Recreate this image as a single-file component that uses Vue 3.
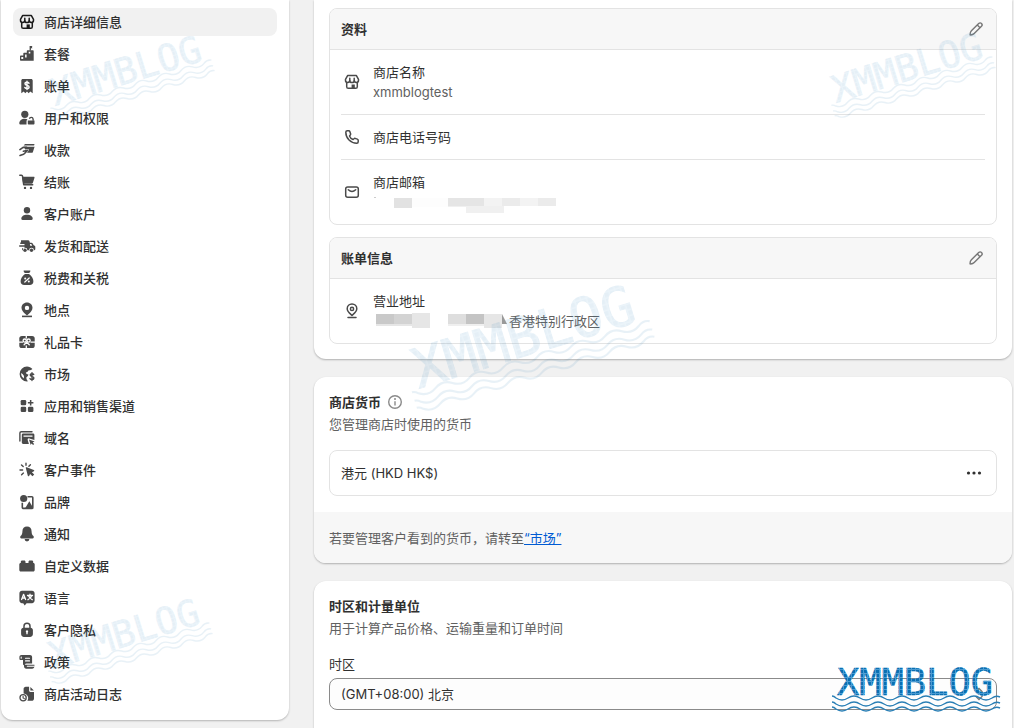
<script setup>
import { ref } from 'vue'

const store =
  '<g fill="none" stroke="currentColor" stroke-width="1.5" stroke-linejoin="round" stroke-linecap="round"><path d="M5.600 3.600h8.800l2.100 3.700v.9a2.100 2.100 0 0 1-4.300.2 2.200 2.200 0 0 1-4.400 0 2.100 2.100 0 0 1-4.300-.2v-.9z"/><path d="M4.700 10.400v4.300c0 .9.700 1.600 1.600 1.600h7.400c.9 0 1.600-.7 1.600-1.600v-4.300M7.800 6.200v2M12.200 6.200v2"/></g><path d="M9.600 12.400h3.200v4h-3.200z"/>'

const items = [
  { label: '商店详细信息', icon: store },
  {
    label: '套餐',
    icon: '<path d="M3 12.500c0-.6.4-1 1-1h2.300V9.800c0-.6.4-1 1-1h2.500V7.200c0-.6.4-1 1-1h4.900c.6 0 1 .4 1 1v9.600H4c-.6 0-1-.4-1-1z"/><path fill="#fff" d="M4.300 13h1.900v2H4.300zM8.100 10.400h1.500v3H8.100zM11.700 7.800h1.600v1.800h-1.600z"/><path d="M12.600 2h2.900l-.7 1 .7 1.200h-1.600v2.300h-1.300z"/>',
  },
  {
    label: '账单',
    icon: '<path d="M4.300 4.500c0-.9.700-1.600 1.500-1.600h8.400c.8 0 1.500.7 1.500 1.600V17.200l-2.400-1.600-1.600 1.600-1.700-1.600-1.700 1.600-1.600-1.600-2.400 1.600z"/><path fill="none" stroke="#fff" stroke-width="1.400" stroke-linecap="round" d="M12 7.200c-.5-.6-1.200-.9-2-.9-1.100 0-2 .6-2 1.500 0 2.200 4.100 1 4.100 3.100 0 1-.9 1.600-2.100 1.600-.9 0-1.700-.4-2.200-1M10 5.200v8.400"/>',
  },
  {
    label: '用户和权限',
    icon: '<circle cx="7.800" cy="6.300" r="3.600"/><path d="M2.300 15.300c0-2.800 2.300-4.600 5.500-4.600 1 0 1.900.2 2.700.5-.7.6-1 1.300-1 2.200v3.200H3.600c-.8 0-1.300-.5-1.300-1.300zM10.800 12.500h6.700v2.900c0 .7-.5 1.200-1.200 1.200H12c-.7 0-1.200-.5-1.200-1.200z"/><path fill="none" stroke="currentColor" stroke-width="1.400" d="M12.400 10.800a1.900 1.900 0 0 1 3.700.2v1.700"/>',
  },
  {
    label: '收款',
    icon: '<path d="M8 4h9.500l-.4 1.600H6.700zM7 6.700h10.600l-1.700 5.200c-.2.600-.6.900-1.200.9H10l1.700-2.200c.6-.8 0-1.800-1-1.600l-2.500.4z"/><path fill="none" stroke="currentColor" stroke-width="1.600" stroke-linecap="round" stroke-linejoin="round" d="M2.900 9.600l3.200-2.200h3.500M3 15.500l3.500-1.300c1.200-.5 2.400-2 4.200-4l-4.300 1"/>',
  },
  {
    label: '结账',
    icon: '<path fill="none" stroke="currentColor" stroke-width="1.500" stroke-linecap="round" stroke-linejoin="round" d="M2.800 3.300h1.700c.6 0 .9.300 1 .9l1.200 8.500h9"/><path d="M5 4.800h11.700c.6 0 1 .5.800 1l-1.600 5c-.2.600-.7.900-1.300.9H6.200z"/><circle cx="8" cy="15.900" r="1.200"/><circle cx="14" cy="15.900" r="1.200"/>',
  },
  {
    label: '客户账户',
    icon: '<circle cx="10" cy="6.200" r="3.200"/><path d="M4.300 14.800c0-2.500 2.500-4 5.700-4s5.700 1.500 5.700 4c0 .7-.5 1.200-1.200 1.200h-9c-.7 0-1.200-.5-1.200-1.200z"/>',
  },
  {
    label: '发货和配送',
    icon: '<path d="M4 4.300h7.200c.6 0 1 .3 1.200.8l.5 1.700h1.600c.5 0 .9.300 1.200.7l1 1.700 1 .6c.4.200.6.600.6 1v2.200c0 .7-.4 1.200-1 1.200h-.4a2.400 2.400 0 0 0-4.800 0h-1.700a2.400 2.400 0 0 0-4.800 0H5V12.300h2.500v-1.500H2.200V9.300h5.300V7.900H3.200V6.400H4z"/><circle cx="8" cy="14.300" r="1.700"/><circle cx="14.500" cy="14.300" r="1.700"/><path fill="#fff" d="M12.900 8.100h1.400l.9 1.600h-2z"/>',
  },
  {
    label: '税费和关税',
    icon: '<path d="M7.200 2.400h5.600c.5 0 .8.500.6.900L12.300 5H7.700L6.600 3.300c-.2-.4.100-.9.600-.9zM8 6h4c2.500 1.800 4.400 4.300 4.400 7.300 0 2.500-1.500 3.800-3.600 3.800H7.200c-2.100 0-3.600-1.300-3.600-3.800C3.600 10.300 5.500 7.800 8 6z"/><path stroke="#fff" stroke-width="1.200" stroke-linecap="round" d="M7.800 14l4.400-4"/><circle cx="8.200" cy="10.500" r="1" fill="#fff"/><circle cx="11.800" cy="13.600" r="1" fill="#fff"/>',
  },
  {
    label: '地点',
    icon: '<path fill-rule="evenodd" d="M10 2.500c3.200 0 5.500 2.300 5.500 5.300 0 2.600-1.800 4.300-3.500 6L10 15.600l-2-1.800c-1.700-1.700-3.500-3.400-3.500-6 0-3 2.300-5.300 5.500-5.300zm0 3.200a2.200 2.200 0 1 0 0 4.400 2.200 2.200 0 0 0 0-4.400z"/><path d="M5 15.600h10v1.600H5z"/>',
  },
  {
    label: '礼品卡',
    icon: '<rect x="2.300" y="4" width="15.400" height="12" rx="2.600"/><g fill="none" stroke="#fff" stroke-width="1.300"><path d="M9.300 3.500v3.100M9.300 13.600v3M2 10.200h4M13.500 10.200H18"/><circle cx="7.700" cy="8.600" r="1.600"/><circle cx="11.600" cy="8.600" r="1.600"/><path stroke-linecap="round" d="M9.600 10.200l-2.500 2.600M9.600 10.200l2.700 2.600"/></g>',
  },
  {
    label: '市场',
    icon: '<path fill-rule="evenodd" d="M10 2.600c2.100 0 4 .9 5.400 2.400l-1.400.9-2.600.5-1.100 1.700-1.500.4.800 1.500 1.800.4-.5 1.700-1.500 1.200c-.1 1.600.4 2.900 1.500 3.900l-.9.200a7.400 7.400 0 0 1 0-14.800zM4.200 9.100c-.2 2.300.8 4.300 2.600 5.300l.2-2.500-1.200-1.700z"/><path fill="none" stroke="currentColor" stroke-width="1.400" stroke-linecap="round" d="M16.700 10.500c-.4-.6-1-.8-1.700-.8-1 0-1.800.5-1.800 1.400 0 2 3.700 1 3.700 2.900 0 .9-.8 1.500-1.900 1.500-.8 0-1.600-.3-2-.9M15 8.600v8"/>',
  },
  {
    label: '应用和销售渠道',
    icon: '<rect x="3.700" y="4" width="5.500" height="5.300" rx="1.300"/><rect x="3.700" y="10.800" width="5.500" height="5.300" rx="1.300"/><rect x="10.900" y="10.800" width="5.500" height="5.300" rx="1.300"/><path d="M12.900 4h1.500v2h2v1.500h-2v2h-1.500v-2h-2V6h2z"/>',
  },
  {
    label: '域名',
    icon: '<path fill="none" stroke="currentColor" stroke-width="1.400" stroke-linecap="round" d="M2.900 13V5.100c0-.8.600-1.400 1.400-1.400H15"/><path fill-rule="evenodd" d="M6.200 5.600h9.800c.8 0 1.400.6 1.400 1.400v4.900l-5.100-1.500c-1-.3-1.900.6-1.600 1.600l1.200 4H6.200c-.8 0-1.400-.6-1.400-1.400V7c0-.8.600-1.400 1.400-1.400zM6.500 7.500v1.200h9V7.500z"/><path d="M12 11.400l5.600 2-2 1 1.600 1.600-1.100 1-1.600-1.600-.8 1.600z"/>',
  },
  {
    label: '客户事件',
    icon: '<path d="M8.800 8.100c-.2-.5.300-1 .9-.8l7.100 2.600c.6.200.6 1 .1 1.300l-2 1 2.300 2.400-1.700 1.700-2.400-2.400-1 2c-.3.500-1.100.5-1.300-.1z"/><path fill="none" stroke="currentColor" stroke-width="1.400" stroke-linecap="round" d="M9 3.200v2.100M4.500 5l1.700 1.600M3 10h2.600M4.600 14.700l1.800-1.600M13.400 4.700l-1.500 1.500"/>',
  },
  {
    label: '品牌',
    icon: '<circle cx="6.700" cy="6.500" r="3.600"/><path fill="none" stroke="currentColor" stroke-width="1.600" d="M10.500 4.700h4.400c.5 0 .9.400.9.900v9.900c0 .5-.4.900-.9.900H6.200c-.5 0-.9-.4-.9-.9v-4.700"/><path d="M12.300 9.200l4.200 7.300H8z"/>',
  },
  {
    label: '通知',
    icon: '<path d="M10 2.600c2.800 0 4.600 2 4.600 4.800 0 2.200.6 3.300 1.800 4.600.9 1 .4 2.400-.9 2.400h-11c-1.300 0-1.800-1.400-.9-2.400 1.200-1.300 1.800-2.400 1.800-4.600 0-2.800 1.800-4.800 4.600-4.800zM7.600 15h4.800a2.400 2.400 0 0 1-4.800 0z"/>',
  },
  {
    label: '自定义数据',
    icon: '<path d="M2.300 8.500c0-.8.600-1.400 1.500-1.400V6c0-.8.600-1.400 1.300-1.400h2.100c.8 0 1.300.6 1.300 1.400v1.100h3V6c0-.8.500-1.400 1.300-1.400h2.100c.8 0 1.300.6 1.300 1.400v1.100c.9 0 1.500.6 1.500 1.400v5.400c0 .8-.6 1.500-1.500 1.500H3.800c-.9 0-1.500-.7-1.500-1.500z"/>',
  },
  {
    label: '语言',
    icon: '<path d="M5 2.800h10c1.500 0 2.600 1.100 2.600 2.600v7.200c0 1.500-1.100 2.600-2.600 2.600H9.600l-1.900 2.200-1.500-2.200H5c-1.500 0-2.600-1.100-2.600-2.600V5.400C2.400 3.900 3.500 2.800 5 2.800z"/><path fill="none" stroke="#fff" stroke-width="1.300" stroke-linecap="round" stroke-linejoin="round" d="M4.600 11.500l2-5.200 2 5.200M5.300 10h2.600M10.500 7.500h5M13 6.200v1.300M14.600 7.800c-.5 1.700-1.700 3-3.600 3.900M11.500 7.800c.7 1.700 1.900 3 3.700 3.900"/>',
  },
  {
    label: '客户隐私',
    icon: '<path fill="none" stroke="currentColor" stroke-width="1.500" d="M7 8.500V6.300a3 3 0 0 1 6 0v2.200"/><path fill-rule="evenodd" d="M6.500 7.700h7c1.400 0 2.400 1 2.400 2.400v3.900c0 1.600-1.200 2.900-2.900 2.900H7c-1.700 0-2.900-1.300-2.900-2.900v-3.900c0-1.400 1-2.400 2.400-2.400zM10 10.300a1.300 1.300 0 0 0-.7 2.300v1.700h1.400v-1.700a1.300 1.300 0 0 0-.7-2.300z"/>',
  },
  {
    label: '政策',
    icon: '<path d="M4.500 2.900H13c1.200 0 2.100.9 2.100 2.100v6.500H9.500c-1.300 0-2 .8-2 2.300L6 12.500V8H3.700c-.8 0-1.300-.5-1.300-1.300V5c0-1.200.9-2.100 2.100-2.100z"/><path d="M8.500 12.700h8.900v1.600c0 1.500-.9 2.400-2.300 2.400H9.300c-1.400 0-2.300-.9-2.300-2.400v-2.500z"/><path fill="none" stroke="#fff" stroke-width="1.100" stroke-linecap="round" d="M8.500 6.200h4M8.500 8.900h4M4.200 6.300V5M10.300 14.300h7"/>',
  },
  {
    label: '商店活动日志',
    icon: '<path d="M8.800 2.800h3.300v3.900c0 .7.600 1.200 1.300 1.200H17v6.500c0 1.400-1 2.300-2.300 2.300h-4.300c.5-.8.800-1.700.8-2.600 0-2.600-1.900-4.600-4.600-4.700V5.100c0-1.400.9-2.300 2.200-2.300z"/><path d="M13.400 3l3.500 3.600h-3.500z"/><circle cx="6.100" cy="13.800" r="3.100" fill="none" stroke="currentColor" stroke-width="1.300"/><path fill="none" stroke="currentColor" stroke-width="1.100" stroke-linecap="round" d="M6.100 12.300v1.700l1.200.5"/>',
  },
]

const phone =
  '<path fill="none" stroke="currentColor" stroke-width="1.500" stroke-linejoin="round" d="M5.300 3.800h1.400c.6 0 1 .3 1.200.9l.7 2.100c.1.500 0 .9-.3 1.200l-.8.900c.6 1.700 1.900 3 3.600 3.600l.9-.8c.3-.3.8-.4 1.200-.3l2.100.7c.6.2.9.600.9 1.200v1.400c0 .9-.7 1.500-1.500 1.500C8.800 16.200 3.800 11.200 3.800 5.300c0-.8.600-1.500 1.500-1.500z"/>'
const mail =
  '<g fill="none" stroke="currentColor" stroke-width="1.500" stroke-linecap="round"><rect x="3.700" y="5" width="12.600" height="10.300" rx="2"/><path d="M6.300 7.800c2.200 2 5.200 2 7.400 0"/></g>'
const pin =
  '<g fill="none" stroke="currentColor" stroke-width="1.500" stroke-linecap="round" stroke-linejoin="round"><path d="M10 14.400c-1.700-1.600-4.800-3.800-4.800-6.700a4.800 4.800 0 0 1 9.600 0c0 2.900-3.100 5.100-4.800 6.700z"/><circle cx="10" cy="7.900" r="1.600"/><path d="M6 16.500h8"/></g>'

const timezone = ref('beijing')
const waves = [32, 38, 43]
const marks = ['mark-nav-top', 'mark-nav-bottom', 'mark-right', 'mark-center', 'mark-solid']
const wavePath = (y) => `M0 ${y - 2}q2 0 4 2q6 4 12 0${'t12 0'.repeat(12)}q4 -3 8 -1`
</script>

<template>
  <div class="page">
    <nav class="sidebar" aria-label="设置">
      <a v-for="(item, i) in items" :key="item.label" href="#" class="nav-item" :class="{ active: i === 0 }">
        <svg class="icon" viewBox="0 0 20 20" aria-hidden="true" v-html="item.icon"></svg>
        <span>{{ item.label }}</span>
      </a>
    </nav>

    <main class="content">
      <section class="card first">
        <div class="group">
          <header class="group-head">
            <h2>资料</h2>
            <button type="button" class="icon-button" aria-label="编辑资料">
              <svg class="icon" viewBox="0 0 20 20"><path d="M12.700 4.500a1.950 1.950 0 0 1 2.800 2.800l-7.300 7.300c-.9.9-1.900 1.500-4.100 1.300-.2-2.200.4-3.200 1.300-4.100zM11.300 6l2.700 2.700" /></svg>
            </button>
          </header>
          <div class="row">
            <svg class="icon" viewBox="0 0 20 20" aria-hidden="true" v-html="store"></svg>
            <div><p>商店名称</p><p class="muted">xmmblogtest</p></div>
          </div>
          <div class="row">
            <svg class="icon" viewBox="0 0 20 20" aria-hidden="true" v-html="phone"></svg>
            <p>商店电话号码</p>
          </div>
          <div class="row">
            <svg class="icon" viewBox="0 0 20 20" aria-hidden="true" v-html="mail"></svg>
            <div>
              <p>商店邮箱</p>
              <svg class="redacted" width="190" height="20" aria-hidden="true">
                <path fill="#e2e2e2" d="M21 6h18v10H21z" />
                <path fill="#fdfdfd" d="M39 6h36v9H39z" />
                <path fill="#e5e5e5" d="M75 6h36v8H75z" />
                <path fill="#f3f3f3" d="M111 6h54v8h-54z" />
                <path fill="#ebebeb" d="M129 6h18v8h-18zM165 6h18v8h-18z" />
                <path fill="#f0f0f0" d="M93 14h38v7H93zM75 14h18v1H75z" />
                <path fill="#ccc" d="M1 5h2v1H1z" />
              </svg>
            </div>
          </div>
        </div>
        <div class="group">
          <header class="group-head">
            <h2>账单信息</h2>
            <button type="button" class="icon-button" aria-label="编辑账单信息">
              <svg class="icon" viewBox="0 0 20 20"><path d="M12.700 4.500a1.950 1.950 0 0 1 2.800 2.800l-7.300 7.300c-.9.9-1.900 1.500-4.100 1.300-.2-2.200.4-3.200 1.300-4.100zM11.300 6l2.700 2.700" /></svg>
            </button>
          </header>
          <div class="row">
            <svg class="icon" viewBox="0 0 20 20" aria-hidden="true" v-html="pin"></svg>
            <div>
              <p>营业地址</p>
              <p class="muted address">
                <svg class="redacted" width="136" height="20" aria-hidden="true">
                  <path fill="#c9c9c9" d="M3 3h18v10H3z" />
                  <path fill="#d3d3d3" d="M21 3h18v10H21z" />
                  <path fill="#e6e6e6" d="M39 2h18v15H39zM3 13h36v2H3zM111 3h18v14h-18z" />
                  <path fill="#dedede" d="M75 3h18v10H75z" />
                  <path fill="#c4c4c4" d="M93 3h18v10H93z" />
                  <path fill="#efefef" d="M75 13h36v2H75z" />
                  <path fill="#999" d="M129 3l5 10h-5z" />
                </svg>
                <span>香港特别行政区</span>
              </p>
            </div>
          </div>
        </div>
      </section>

      <section class="card">
        <div class="section">
          <div class="title">
            <h2>商店货币</h2>
            <svg class="icon info" viewBox="0 0 20 20" aria-hidden="true">
              <circle cx="10" cy="10" r="6.300" fill="none" stroke="currentColor" stroke-width="1.400" />
              <path d="M9.300 9.200h1.400v4.300H9.300z" /><circle cx="10" cy="7" r="1" />
            </svg>
          </div>
          <p class="muted subtitle">您管理商店时使用的货币</p>
          <div class="currency">
            <span>港元 (HKD HK$)</span>
            <button type="button" class="icon-button more" aria-label="更多操作">
              <svg class="icon" viewBox="0 0 20 20"><circle cx="4.500" cy="10" r="1.600" /><circle cx="10" cy="10" r="1.600" /><circle cx="15.500" cy="10" r="1.600" /></svg>
            </button>
          </div>
        </div>
        <footer class="card-foot muted">若要管理客户看到的货币，请转至<a href="#">“市场”</a></footer>
      </section>

      <section class="card last">
        <div class="section">
          <h2>时区和计量单位</h2>
          <p class="muted subtitle">用于计算产品价格、运输重量和订单时间</p>
          <div class="field">
            <label for="timezone">时区</label>
            <div class="select-wrap">
              <select id="timezone" v-model="timezone">
                <option value="beijing">(GMT+08:00) 北京</option>
              </select>
              <svg class="icon caret" viewBox="0 0 20 20" aria-hidden="true"><path d="M6.500 8L10 4.500 13.500 8M6.500 12l3.500 3.500 3.500-3.500" /></svg>
            </div>
          </div>
        </div>
      </section>
    </main>

    <svg v-for="mark in marks" :key="mark" class="mark" :class="mark" viewBox="0 0 168 48" aria-hidden="true">
      <defs>
        <pattern :id="mark + '-dots'" width="4" height="4" patternUnits="userSpaceOnUse">
          <rect width="4" height="4" fill="#4a9ad0" />
          <rect width="3" height="3" fill="#0a6fb2" />
        </pattern>
      </defs>
      <text x="5" y="29" class="mark-text" :fill="`url(#${mark}-dots)`" :stroke="`url(#${mark}-dots)`">XMMBLOG</text>
      <path v-for="y in waves" :key="y" :d="wavePath(y)" class="wave" />
    </svg>
  </div>
</template>

<style>
body {
  margin: 0;
  background: #f1f1f1;
}
</style>

<style scoped>
.page {
  position: relative;
  box-sizing: border-box;
  display: flex;
  align-items: flex-start;
  gap: 25px;
  height: 100vh;
  padding: 0 2px 0 1px;
  overflow: hidden;
  font: 400 13px/20px Inter, "Noto Sans CJK SC", sans-serif;
  color: #303030;
}
h2,
p {
  margin: 0;
  font-size: 13px;
  line-height: 20px;
}
h2 {
  font-weight: 600;
}
.icon {
  flex: none;
  width: 20px;
  height: 20px;
  fill: currentColor;
  color: #4a4a4a;
}
.muted {
  color: #616161;
}
.sidebar {
  flex: none;
  box-sizing: border-box;
  display: flex;
  flex-direction: column;
  gap: 4px;
  width: 288px;
  padding: 8px 12px 12px;
  background: #fff;
  border-radius: 0 0 12px 12px;
  box-shadow: 0 1px 2px rgba(0, 0, 0, 0.25);
}
.nav-item {
  display: flex;
  align-items: center;
  gap: 7px;
  padding: 4px;
  border-radius: 8px;
  color: #303030;
  font-weight: 500;
  text-decoration: none;
}
.nav-item.active {
  background: #f1f1f1;
}
.nav-item.active .icon {
  color: #1a1a1a;
}
.content {
  flex: 1;
  min-width: 0;
  display: flex;
  flex-direction: column;
  gap: 18px;
}
.card {
  background: #fff;
  border-radius: 12px;
  box-shadow: 0 1px 2px rgba(0, 0, 0, 0.28);
  overflow: hidden;
}
.card.first {
  display: flex;
  flex-direction: column;
  gap: 12px;
  padding: 8px 15px 15px;
  border-top-left-radius: 0;
  border-top-right-radius: 0;
}
.card.last {
  padding-bottom: 24px;
}
.group {
  border: 1px solid #e3e3e3;
  border-radius: 8px;
  overflow: hidden;
}
.group-head {
  display: flex;
  align-items: center;
  justify-content: space-between;
  padding: 10px;
  padding-left: 11px;
  background: #f7f7f7;
  border-bottom: 1px solid #e3e3e3;
}
.icon-button {
  display: flex;
  padding: 0;
  border: 0;
  background: none;
  cursor: pointer;
}
.icon-button .icon {
  fill: none;
  stroke: #777;
  stroke-width: 1.4;
  stroke-linejoin: round;
}
.icon-button.more .icon {
  fill: #303030;
  stroke: none;
}
.row {
  display: flex;
  align-items: center;
  gap: 10px;
  margin: 0 11px;
  padding: 12px 0;
}
.row > .icon {
  padding: 0 1px;
}
.row + .row {
  border-top: 1px solid #e3e3e3;
}
.redacted {
  display: block;
  flex: none;
  overflow: visible;
}
.address {
  display: flex;
}
.section {
  padding: 15px 15px 16px;
}
.title {
  display: flex;
  align-items: center;
  gap: 4px;
}
.info {
  color: #8a8a8a;
}
.subtitle {
  margin-top: 2px;
}
.currency {
  display: flex;
  align-items: center;
  justify-content: space-between;
  margin-top: 16px;
  padding: 12px;
  padding-left: 11px;
  border: 1px solid #e3e3e3;
  border-radius: 8px;
}
.card-foot {
  padding: 16px 15px 15px;
  background: #f7f7f7;
}
.card-foot a {
  color: #005bd3;
}
.field {
  display: flex;
  flex-direction: column;
  gap: 4px;
  margin-top: 16px;
}
.select-wrap {
  position: relative;
}
select {
  appearance: none;
  display: block;
  box-sizing: border-box;
  width: 100%;
  height: 32px;
  padding: 0 32px 0 11px;
  border: 1px solid #8a8a8a;
  border-radius: 8px;
  background: #fdfdfd;
  color: #303030;
  font: inherit;
}
.caret {
  position: absolute;
  top: 6px;
  right: 8px;
  fill: none;
  stroke: #777;
  stroke-width: 1.3;
}
.mark {
  position: absolute;
  width: 168px;
  height: 48px;
  overflow: visible;
  opacity: 0.1;
  transform: rotate(-17deg);
  pointer-events: none;
}
.mark-text {
  font: 400 37px "DejaVu Sans Mono", monospace;
  stroke-width: 0.6;
}
.wave {
  fill: none;
  stroke: #2a7fb5;
  stroke-width: 1.4;
}
.mark-nav-top {
  left: 45px;
  top: 54px;
}
.mark-nav-bottom {
  left: 43px;
  top: 617px;
}
.mark-right {
  right: 20px;
  top: 51px;
}
.mark-center {
  right: 362px;
  top: 312px;
  width: 248px;
  height: 71px;
}
.mark-solid {
  right: 14px;
  top: 666px;
  opacity: 1;
  transform: none;
}
</style>
